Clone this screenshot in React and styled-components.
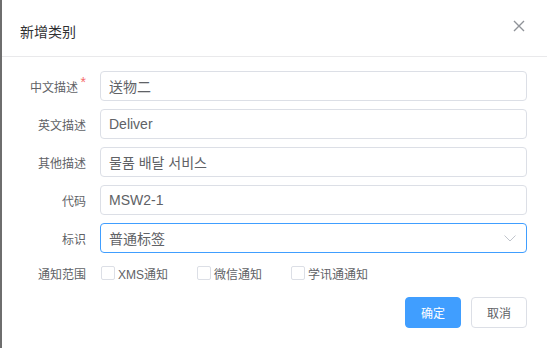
import React from 'react'
import styled, { createGlobalStyle } from 'styled-components'

const Global = createGlobalStyle`
  html, body { margin: 0; padding: 0; background: #fff; }
  body { font-family: "Liberation Sans", "Noto Sans CJK SC", sans-serif; }
`

const Dialog = styled.div`
  width: 547px;
  height: 348px;
  box-sizing: border-box;
  border-left: 2px solid #6e6e6e;
  background: #fff;
  display: flex;
  flex-direction: column;
`

const Header = styled.div`
  height: 57px;
  box-sizing: border-box;
  padding: 20px 20px 0 18px;
  border-bottom: 1px solid #e9e9eb;
  display: flex;
  justify-content: space-between;
  align-items: flex-start;
`

const Title = styled.div`
  font-size: 14px;
  line-height: 24px;
  color: #303133;
`

const Close = styled.button`
  border: 0;
  background: none;
  padding: 0;
  margin: -1px 1px 0 0;
  width: 14px;
  height: 14px;
  cursor: pointer;
  display: flex;
  align-items: center;
  justify-content: center;
`

const Body = styled.div`
  padding: 14px 20px 0 0;
  display: flex;
  flex-direction: column;
  gap: 8px;
`

const Row = styled.div`
  display: flex;
  align-items: center;
  height: ${p => p.h || 30}px;
`

const Label = styled.div`
  width: 84px;
  flex-shrink: 0;
  margin-right: 14px;
  text-align: right;
  font-size: 12px;
  color: #606266;
  position: relative;
  padding-right: ${p => (p.required ? 8 : 0)}px;
  box-sizing: border-box;
`

const Star = styled.span`
  position: absolute;
  right: 0;
  top: -4px;
  color: #f56c6c;
  font-size: 14px;
`

const Input = styled.div`
  flex: 1;
  height: 30px;
  box-sizing: border-box;
  border: 1px solid ${p => (p.focus ? '#409eff' : '#dcdfe6')};
  border-radius: 4px;
  padding: 0 10px 0 8px;
  display: flex;
  align-items: center;
  justify-content: space-between;
  font-size: 14px;
  color: #606266;
`

const Checks = styled.div`
  display: flex;
  align-items: center;
  gap: 29px;
  margin-left: 1px;
`

const Check = styled.label`
  display: flex;
  align-items: center;
  font-size: 12px;
  color: #606266;
`

const Box = styled.span`
  width: 14px;
  height: 14px;
  box-sizing: border-box;
  border: 1px solid #dcdfe6;
  border-radius: 2px;
  margin-right: 3px;
`

const Footer = styled.div`
  display: flex;
  justify-content: flex-end;
  gap: 10px;
  padding: 12px 20px 0 0;
`

const Button = styled.button`
  width: 56px;
  height: 31px;
  box-sizing: border-box;
  border-radius: 4px;
  font-family: inherit;
  font-size: 12px;
  border: 1px solid ${p => (p.primary ? '#409eff' : '#dcdfe6')};
  background: ${p => (p.primary ? '#409eff' : '#fff')};
  color: ${p => (p.primary ? '#fff' : '#606266')};
  padding: 0;
`

const fields = [
  { label: '中文描述', value: '送物二', required: true },
  { label: '英文描述', value: 'Deliver' },
  { label: '其他描述', value: '물품 배달 서비스' },
  { label: '代码', value: 'MSW2-1' },
]

export default function App() {
  return (
    <Dialog>
      <Global />
      <Header>
        <Title>新增类别</Title>
        <Close>
          <svg width="12" height="12" viewBox="0 0 12 12">
            <path d="M1 1L11 11M11 1L1 11" stroke="#909399" strokeWidth="1.4" />
          </svg>
        </Close>
      </Header>
      <Body>
        {fields.map(f => (
          <Row key={f.label}>
            <Label required={f.required}>
              {f.label}
              {f.required && <Star>*</Star>}
            </Label>
            <Input>{f.value}</Input>
          </Row>
        ))}
        <Row>
          <Label>标识</Label>
          <Input focus>
            普通标签
            <svg width="12" height="7" viewBox="0 0 12 7">
              <path d="M0.5 0.5L6 6L11.5 0.5" fill="none" stroke="#c0c4cc" strokeWidth="1" />
            </svg>
          </Input>
        </Row>
        <Row h={24}>
          <Label>通知范围</Label>
          <Checks>
            <Check><Box />XMS通知</Check>
            <Check><Box />微信通知</Check>
            <Check><Box />学讯通通知</Check>
          </Checks>
        </Row>
      </Body>
      <Footer>
        <Button primary>确定</Button>
        <Button>取消</Button>
      </Footer>
    </Dialog>
  )
}
